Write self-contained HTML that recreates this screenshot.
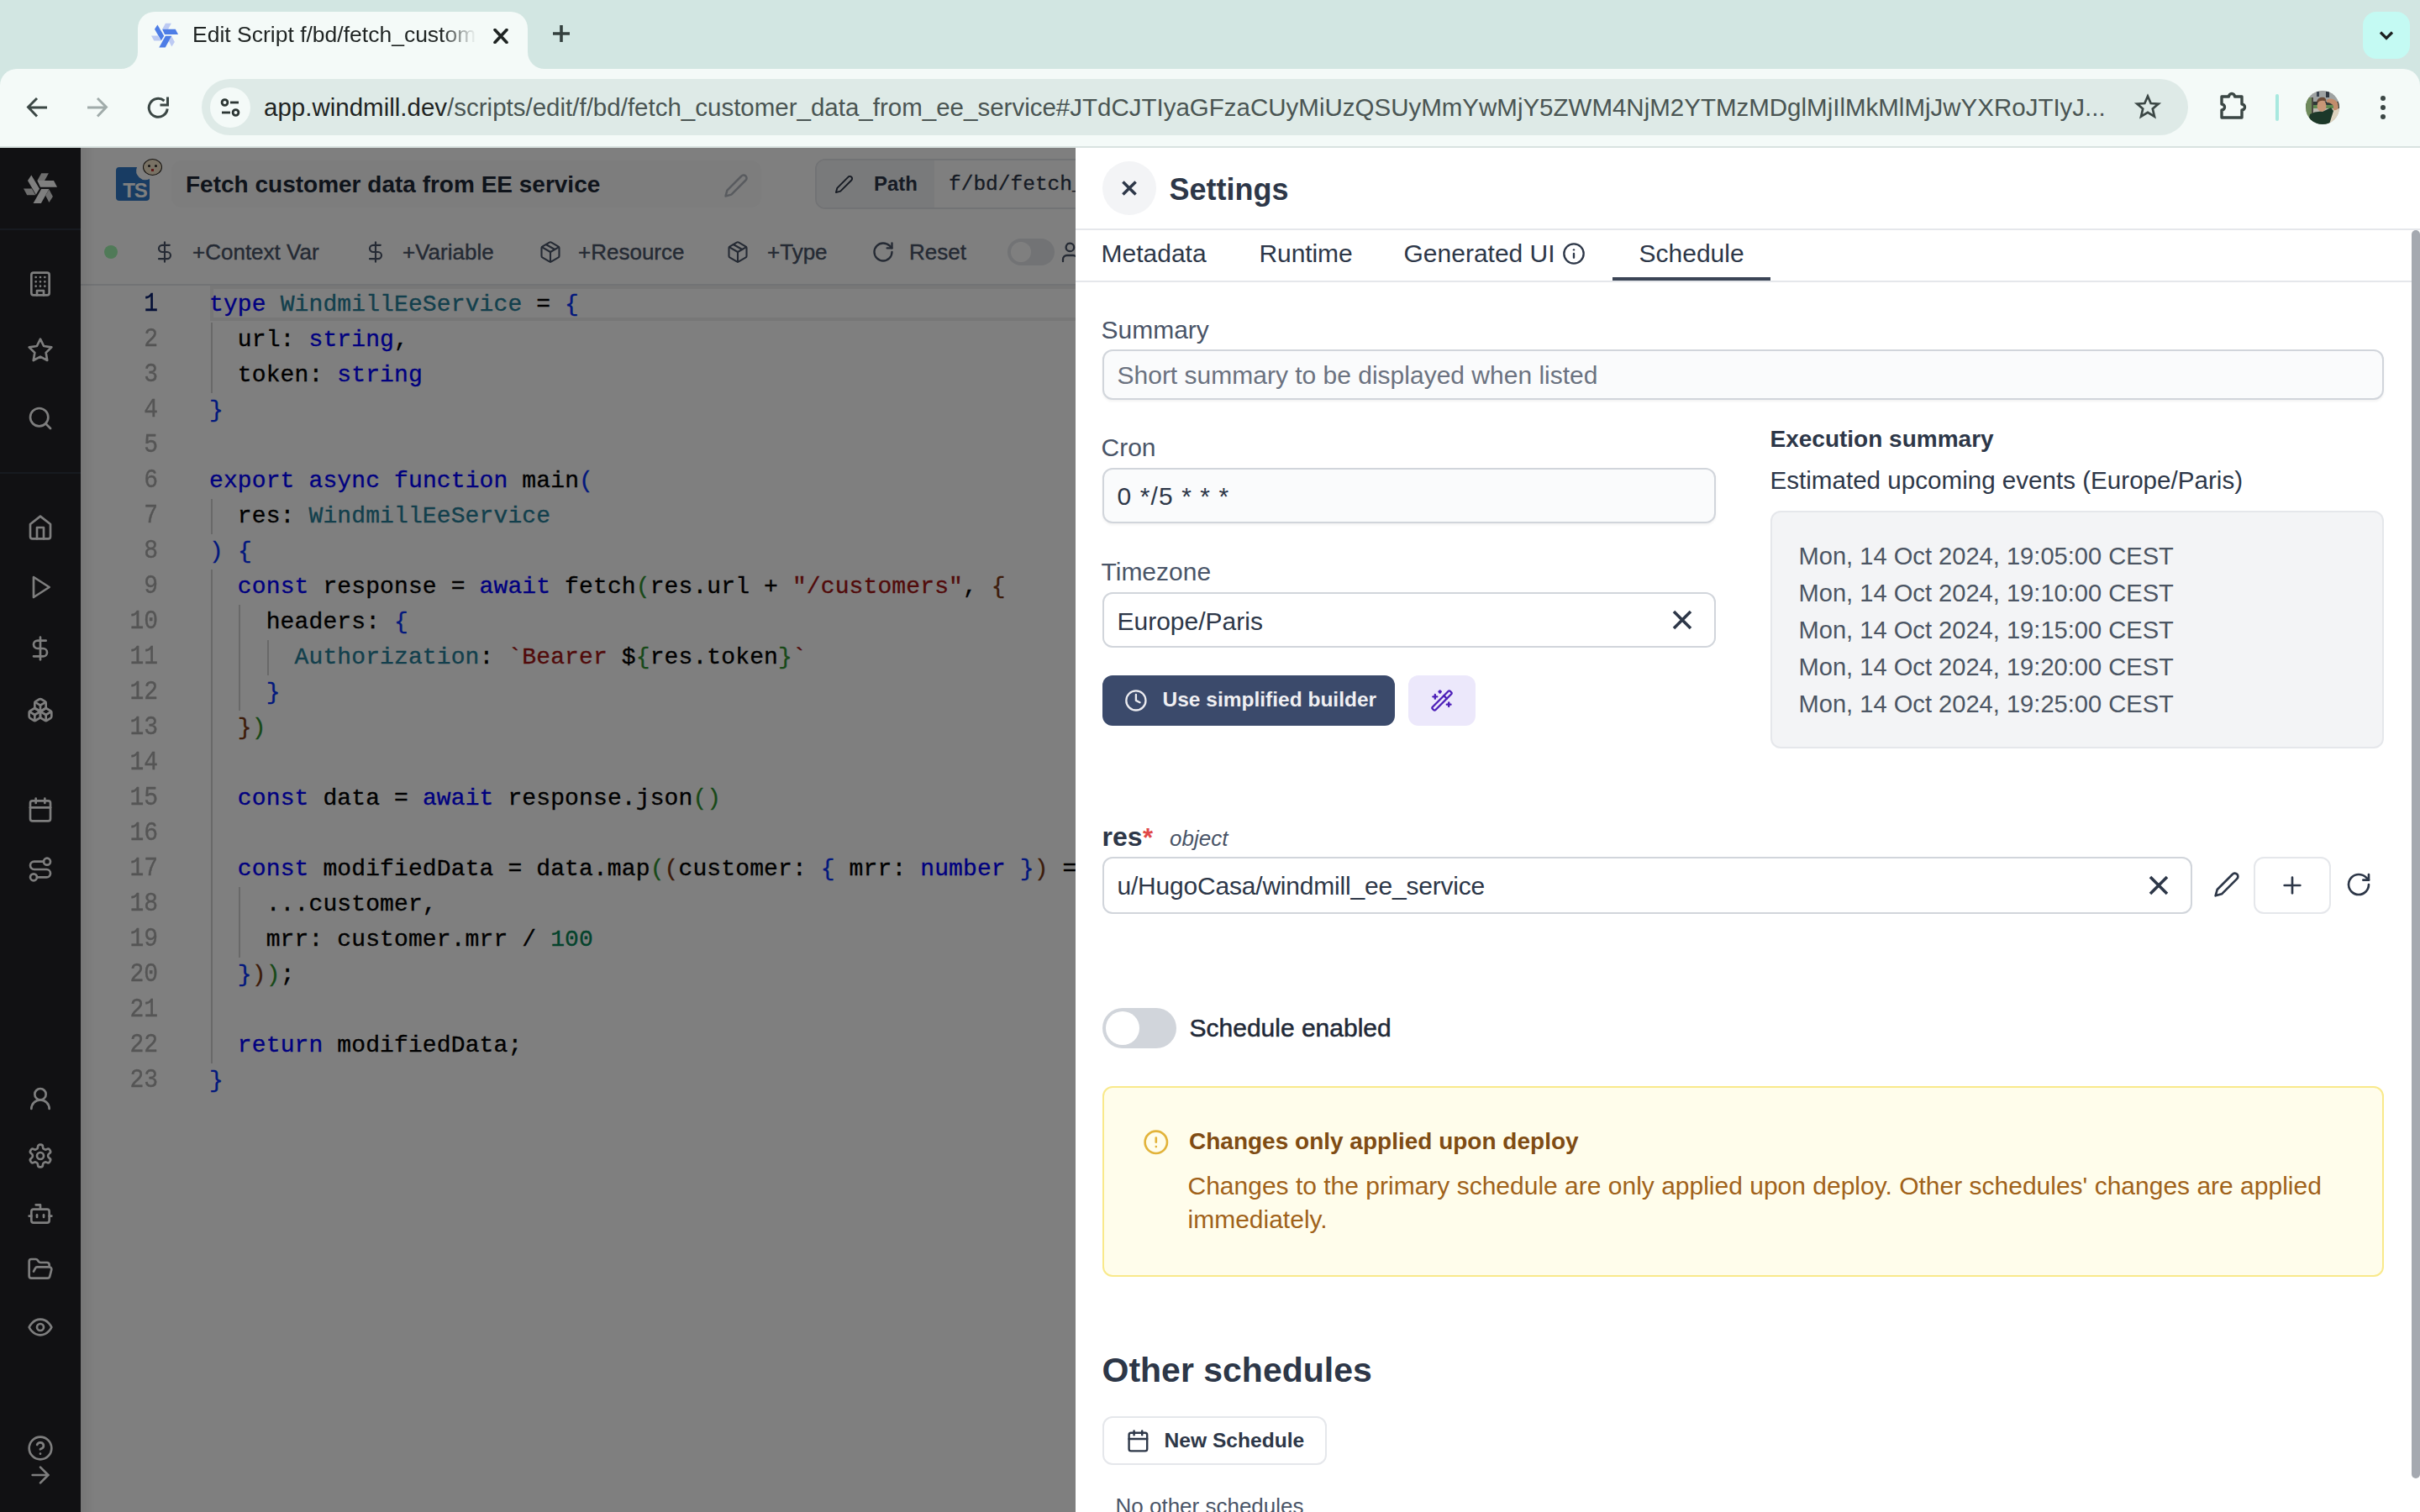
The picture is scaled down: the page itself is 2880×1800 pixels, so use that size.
<!DOCTYPE html>
<html><head><meta charset="utf-8">
<style>
*{box-sizing:border-box;margin:0;padding:0}
html,body{width:2880px;height:1800px;overflow:hidden;background:#fff;font-family:"Liberation Sans",sans-serif}
.abs{position:absolute}
svg{display:block}
/* chrome */
#tabstrip{left:0;top:0;width:2880px;height:176px;background:#d2e6e2}
#tab{left:164px;top:14px;width:464px;height:70px;background:#f4faf8;border-radius:20px 20px 0 0}
.flare{width:20px;height:20px;top:62px;background:#f4faf8}
.flare::after{content:"";position:absolute;inset:0;background:#d2e6e2}
#flL::after{border-bottom-right-radius:20px}
#flR::after{border-bottom-left-radius:20px}
#toolbar{left:0;top:82px;width:2880px;height:92px;background:#f4faf8;border-radius:20px 20px 0 0}
#tbline{left:0;top:174px;width:2880px;height:2px;background:#d9e2e0}
#omni{left:240px;top:94px;width:2364px;height:67px;background:#deeae7;border-radius:34px}
/* app */
#sidebar{left:0;top:176px;width:96px;height:1624px;background:#222326}
#editor{left:96px;top:176px;width:1184px;height:1624px;background:#fff;overflow:hidden}
#overlay{left:0;top:176px;width:1280px;height:1624px;background:rgba(0,0,0,0.5)}
#panel{left:1280px;top:176px;width:1600px;height:1624px;background:#fff;overflow:hidden;color:#2d3748}
.ln{left:0;width:92px;text-align:right;font-family:"Liberation Mono",monospace;font-size:28px;line-height:42px;height:42px;transform:scaleY(1.14);transform-origin:0 28.5px;-webkit-text-stroke:0.3px currentColor}
.code{left:153px;letter-spacing:0.12px;-webkit-text-stroke:0.35px currentColor;font-family:"Liberation Mono",monospace;font-size:28px;line-height:42px;height:42px;white-space:pre;color:#000}
.tb{top:104px;height:40px;font-size:26px;line-height:40px;color:#4a5568;white-space:nowrap;-webkit-text-stroke:0.4px #4a5568}
</style></head><body>
<!-- CHROME -->
<div id="tabstrip" class="abs"></div>
<div id="toolbar" class="abs"></div>
<div id="tab" class="abs"></div>
<div id="flL" class="abs flare" style="left:144px"></div>
<div id="flR" class="abs flare" style="left:628px"></div>
<div id="tbline" class="abs"></div>
<div id="omni" class="abs"></div>
<svg class="abs" style="left:180px;top:27px" width="32" height="30" viewBox="0 0 40 36">
 <g fill="#bccaf3"><polygon points="16.4,9 21.2,0.3 29.9,0.3 25.1,9"/><polygon points="0,18.5 9.8,18.5 14.3,26.2 4.2,26.2"/><polygon points="26.2,26.7 30.4,19.6 34.9,28 30.4,34.9"/></g>
 <g fill="#4d7de6"><polygon points="16.4,9 36,9 40,16.8 20,16.8"/><polygon points="5,9 9.3,2.4 19,18.8 14.8,25.7"/><polygon points="11.6,36 20.9,36 30.4,19 21.2,19"/></g>
</svg>
<div class="abs" id="tabtitle" style="left:229px;top:24px;width:340px;height:34px;font-size:26.5px;line-height:34px;color:#1f2423;white-space:nowrap;overflow:hidden;-webkit-mask-image:linear-gradient(90deg,#000 296px,transparent 338px)">Edit Script f/bd/fetch_customer_data_from_ee_service</div>
<svg class="abs" style="left:586px;top:34px" width="20" height="18" viewBox="0 0 20 18"><path d="M3 1.5 L17 16.5 M17 1.5 L3 16.5" stroke="#1f2423" stroke-width="3.6" stroke-linecap="round"/></svg>
<svg class="abs" style="left:656px;top:28px" width="24" height="24" viewBox="0 0 24 24"><path d="M12 2 V22 M2 12 H22" stroke="#34403e" stroke-width="3.6"/></svg>
<!-- nav -->
<svg class="abs" style="left:30px;top:114px" width="28" height="28" viewBox="0 0 28 28"><path d="M26 14 H4 M14 3 L3.5 13.5 L14 24.5" fill="none" stroke="#3b4745" stroke-width="2.9" stroke-linejoin="miter"/></svg>
<svg class="abs" style="left:102px;top:114px" width="28" height="28" viewBox="0 0 28 28"><path d="M2 14 H24 M14 3 L24.5 13.5 L14 24.5" fill="none" stroke="#a0abaa" stroke-width="2.9"/></svg>
<svg class="abs" style="left:174px;top:114px" width="28" height="28" overflow="visible" viewBox="0 0 28 28"><path d="M25.2 15.5 A11 11 0 1 1 21.5 6" fill="none" stroke="#3b4745" stroke-width="3"/><path d="M25.5 1.5 V11 H16.5" fill="none" stroke="#3b4745" stroke-width="3" stroke-linejoin="miter"/></svg>
<div class="abs" style="left:250px;top:104px;width:48px;height:48px;border-radius:24px;background:#f4faf8"></div>
<svg class="abs" style="left:260px;top:114px" width="28" height="28" viewBox="0 0 28 28"><circle cx="7.5" cy="8" r="3.4" fill="none" stroke="#2c3634" stroke-width="2.8"/><path d="M14 8 H24" stroke="#2c3634" stroke-width="2.8"/><circle cx="20.5" cy="20" r="3.4" fill="none" stroke="#2c3634" stroke-width="2.8"/><path d="M4 20 H14" stroke="#2c3634" stroke-width="2.8"/></svg>
<div class="abs" style="left:314px;top:108px;height:40px;font-size:29.5px;line-height:40px;color:#4a5553;white-space:nowrap"><span style="color:#1f2423">app.windmill.dev</span>/scripts/edit/f/bd/fetch_customer_data_from_ee_service#JTdCJTIyaGFzaCUyMiUzQSUyMmYwMjY5ZWM4NjM2YTMzMDglMjIlMkMlMjJwYXRoJTIyJ...</div>
<svg class="abs" style="left:2539px;top:110px" width="34" height="34" viewBox="0 0 24 24"><path d="M12 3.2 L14.6 9.2 L21 9.6 L16.1 13.8 L17.6 20.2 L12 16.8 L6.4 20.2 L7.9 13.8 L3 9.6 L9.4 9.2 Z" fill="none" stroke="#3b4745" stroke-width="1.9" stroke-linejoin="miter"/></svg>
<svg class="abs" style="left:2640px;top:108px" width="36" height="36" viewBox="0 0 36 36"><path d="M4 7 H12.5 A3.5 3.5 0 0 1 19.5 7 H28 V16 A3.5 3.5 0 0 1 28 23 V32 H4 V23 A3.5 3.5 0 0 0 4 16 Z" fill="none" stroke="#3b4745" stroke-width="3.4" stroke-linejoin="round"/></svg>
<div class="abs" style="left:2708px;top:112px;width:4px;height:32px;border-radius:2px;background:#a8e8df"></div>
<svg class="abs" style="left:2744px;top:108px" width="40" height="40" viewBox="0 0 40 40"><defs><clipPath id="av"><circle cx="20" cy="20" r="20"/></clipPath></defs><g clip-path="url(#av)"><rect width="40" height="40" fill="#b9b8b0"/><rect y="0" width="40" height="13" fill="#9ea2a2"/><rect x="13" y="1" width="3" height="6" fill="#3b4450"/><rect x="24" y="1" width="4" height="7" fill="#2f3740"/><rect x="0" y="13" width="40" height="8" fill="#2e3836"/><rect x="8" y="17" width="30" height="4" fill="#5f8a50"/><rect x="0" y="8" width="9" height="30" fill="#6f8a5c"/><rect x="7" y="8" width="2" height="26" fill="#4a4a40"/><rect x="27" y="22" width="13" height="18" fill="#ddd3bf"/><path d="M25 11 Q31 7 38 14 L39 20 Q37 24 33 23 L33 18 Q30 14 25 14 Z" fill="#c28d6c"/><ellipse cx="19" cy="18" rx="5.5" ry="7" fill="#c99777"/><path d="M13 13 Q15 7 22 8 Q25 10 24 13 Q19 10 14 14 Z" fill="#6b4a36"/><path d="M2 40 L5 28 Q12 24 20 25 Q26 22 30 20 L33 24 L28 40 Z" fill="#1c3829"/></g></svg>
<div class="abs" style="left:2833px;top:114px;width:6px;height:6px;border-radius:3px;background:#3b4745"></div>
<div class="abs" style="left:2833px;top:125px;width:6px;height:6px;border-radius:3px;background:#3b4745"></div>
<div class="abs" style="left:2833px;top:136px;width:6px;height:6px;border-radius:3px;background:#3b4745"></div>
<div class="abs" style="left:2812px;top:14px;width:56px;height:56px;border-radius:16px;background:#c4faf3"></div>
<svg class="abs" style="left:2828px;top:30px" width="24" height="24" viewBox="0 0 24 24"><path d="M5 8.5 L12 15.5 L19 8.5" fill="none" stroke="#1c2120" stroke-width="3.2"/></svg>


<!-- APP -->
<!-- SIDEBAR -->
<div id="sidebar" class="abs">
<svg class="abs" style="left:28px;top:30px" width="40" height="36" viewBox="0 0 40 36"><g fill="#dcdcdc"><polygon points="16.4,9 21.2,0.3 29.9,0.3 25.1,9"/><polygon points="0,18.5 9.8,18.5 14.3,26.2 4.2,26.2"/><polygon points="26.2,26.7 30.4,19.6 34.9,28 30.4,34.9"/></g><g fill="#ffffff"><polygon points="16.4,9 36,9 40,16.8 20,16.8"/><polygon points="5,9 9.3,2.4 19,18.8 14.8,25.7"/><polygon points="11.6,36 20.9,36 30.4,19 21.2,19"/></g></svg>
<div class="abs" style="left:0;top:96px;width:96px;height:2px;background:#2e3440"></div>
<div class="abs" style="left:0;top:386px;width:96px;height:2px;background:#2e3440"></div>
<svg class="abs" style="left:32.0px;top:146.0px" width="32" height="32" viewBox="0 0 24 24" fill="none" stroke="#fdfdfd" stroke-width="2" stroke-linecap="round" stroke-linejoin="round"><rect width="16" height="20" x="4" y="2" rx="2" ry="2"/><path d="M9 22v-4h6v4"/><path d="M8 6h.01M16 6h.01M12 6h.01M12 10h.01M12 14h.01M16 10h.01M16 14h.01M8 10h.01M8 14h.01"/></svg>
<svg class="abs" style="left:32.0px;top:225.0px" width="32" height="32" viewBox="0 0 24 24" fill="none" stroke="#fdfdfd" stroke-width="2" stroke-linecap="round" stroke-linejoin="round"><polygon points="12 2 15.09 8.26 22 9.27 17 14.14 18.18 21.02 12 17.77 5.82 21.02 7 14.14 2 9.27 8.91 8.26 12 2"/></svg>
<svg class="abs" style="left:32.0px;top:306.0px" width="32" height="32" viewBox="0 0 24 24" fill="none" stroke="#fdfdfd" stroke-width="2" stroke-linecap="round" stroke-linejoin="round"><circle cx="11" cy="11" r="8"/><path d="m21 21-4.3-4.3"/></svg>
<svg class="abs" style="left:32.0px;top:436.0px" width="32" height="32" viewBox="0 0 24 24" fill="none" stroke="#fdfdfd" stroke-width="2" stroke-linecap="round" stroke-linejoin="round"><path d="m3 9 9-7 9 7v11a2 2 0 0 1-2 2H5a2 2 0 0 1-2-2z"/><polyline points="9 22 9 12 15 12 15 22"/></svg>
<svg class="abs" style="left:32.0px;top:507.0px" width="32" height="32" viewBox="0 0 24 24" fill="none" stroke="#fdfdfd" stroke-width="2" stroke-linecap="round" stroke-linejoin="round"><polygon points="6 3 20 12 6 21 6 3"/></svg>
<svg class="abs" style="left:32.0px;top:580.0px" width="32" height="32" viewBox="0 0 24 24" fill="none" stroke="#fdfdfd" stroke-width="2" stroke-linecap="round" stroke-linejoin="round"><line x1="12" x2="12" y1="2" y2="22"/><path d="M17 5H9.5a3.5 3.5 0 0 0 0 7h5a3.5 3.5 0 0 1 0 7H6"/></svg>
<svg class="abs" style="left:32.0px;top:653.0px" width="32" height="32" viewBox="0 0 24 24" fill="none" stroke="#fdfdfd" stroke-width="2" stroke-linecap="round" stroke-linejoin="round"><path d="M2.97 12.92A2 2 0 0 0 2 14.63v3.24a2 2 0 0 0 .97 1.71l3 1.8a2 2 0 0 0 2.06 0L12 19v-5.5l-5-3-4.03 2.42Z"/><path d="m7 16.5-4.74-2.85"/><path d="m7 16.5 5-3"/><path d="M7 16.5v5.17"/><path d="M12 13.5V19l3.97 2.38a2 2 0 0 0 2.06 0l3-1.8a2 2 0 0 0 .97-1.71v-3.24a2 2 0 0 0-.97-1.71L17 10.5l-5 3Z"/><path d="m17 16.5-5-3"/><path d="m17 16.5 4.74-2.85"/><path d="M17 16.5v5.17"/><path d="M7.97 4.42A2 2 0 0 0 7 6.13v4.37l5 3 5-3V6.13a2 2 0 0 0-.97-1.71l-3-1.8a2 2 0 0 0-2.06 0l-3 1.8Z"/><path d="M12 8 7.26 5.15"/><path d="m12 8 4.74-2.85"/><path d="M12 13.5V8"/></svg>
<svg class="abs" style="left:32.0px;top:772.0px" width="32" height="32" viewBox="0 0 24 24" fill="none" stroke="#fdfdfd" stroke-width="2" stroke-linecap="round" stroke-linejoin="round"><rect width="18" height="18" x="3" y="4" rx="2" ry="2"/><line x1="16" x2="16" y1="2" y2="6"/><line x1="8" x2="8" y1="2" y2="6"/><line x1="3" x2="21" y1="10" y2="10"/></svg>
<svg class="abs" style="left:32.0px;top:843.0px" width="32" height="32" viewBox="0 0 24 24" fill="none" stroke="#fdfdfd" stroke-width="2" stroke-linecap="round" stroke-linejoin="round"><circle cx="6" cy="19" r="3"/><path d="M9 19h8.5a3.5 3.5 0 0 0 0-7h-11a3.5 3.5 0 0 1 0-7H15"/><circle cx="18" cy="5" r="3"/></svg>
<svg class="abs" style="left:32.0px;top:1116.0px" width="32" height="32" viewBox="0 0 24 24" fill="none" stroke="#fdfdfd" stroke-width="2" stroke-linecap="round" stroke-linejoin="round"><circle cx="12" cy="8" r="5"/><path d="M20 21a8 8 0 0 0-16 0"/></svg>
<svg class="abs" style="left:32.0px;top:1184.0px" width="32" height="32" viewBox="0 0 24 24" fill="none" stroke="#fdfdfd" stroke-width="2" stroke-linecap="round" stroke-linejoin="round"><path d="M12.22 2h-.44a2 2 0 0 0-2 2v.18a2 2 0 0 1-1 1.73l-.43.25a2 2 0 0 1-2 0l-.15-.08a2 2 0 0 0-2.73.73l-.22.38a2 2 0 0 0 .73 2.73l.15.1a2 2 0 0 1 1 1.72v.51a2 2 0 0 1-1 1.74l-.15.09a2 2 0 0 0-.73 2.73l.22.38a2 2 0 0 0 2.73.73l.15-.08a2 2 0 0 1 2 0l.43.25a2 2 0 0 1 1 1.73V20a2 2 0 0 0 2 2h.44a2 2 0 0 0 2-2v-.18a2 2 0 0 1 1-1.73l.43-.25a2 2 0 0 1 2 0l.15.08a2 2 0 0 0 2.73-.73l.22-.39a2 2 0 0 0-.73-2.73l-.15-.08a2 2 0 0 1-1-1.74v-.5a2 2 0 0 1 1-1.74l.15-.09a2 2 0 0 0 .73-2.73l-.22-.38a2 2 0 0 0-2.73-.73l-.15.08a2 2 0 0 1-2 0l-.43-.25a2 2 0 0 1-1-1.73V4a2 2 0 0 0-2-2z"/><circle cx="12" cy="12" r="3"/></svg>
<svg class="abs" style="left:32.0px;top:1253.0px" width="32" height="32" viewBox="0 0 24 24" fill="none" stroke="#fdfdfd" stroke-width="2" stroke-linecap="round" stroke-linejoin="round"><path d="M12 8V4H8"/><rect width="16" height="12" x="4" y="8" rx="2"/><path d="M2 14h2"/><path d="M20 14h2"/><path d="M15 13v2"/><path d="M9 13v2"/></svg>
<svg class="abs" style="left:32.0px;top:1319.0px" width="32" height="32" viewBox="0 0 24 24" fill="none" stroke="#fdfdfd" stroke-width="2" stroke-linecap="round" stroke-linejoin="round"><path d="m6 14 1.5-2.9A2 2 0 0 1 9.24 10H20a2 2 0 0 1 1.94 2.5l-1.54 6a2 2 0 0 1-1.95 1.5H4a2 2 0 0 1-2-2V5a2 2 0 0 1 2-2h3.9a2 2 0 0 1 1.69.9l.81 1.2a2 2 0 0 0 1.67.9H18a2 2 0 0 1 2 2v2"/></svg>
<svg class="abs" style="left:32.0px;top:1388.0px" width="32" height="32" viewBox="0 0 24 24" fill="none" stroke="#fdfdfd" stroke-width="2" stroke-linecap="round" stroke-linejoin="round"><path d="M2 12s3-7 10-7 10 7 10 7-3 7-10 7-10-7-10-7Z"/><circle cx="12" cy="12" r="3"/></svg>
<svg class="abs" style="left:32.0px;top:1532.0px" width="32" height="32" viewBox="0 0 24 24" fill="none" stroke="#fdfdfd" stroke-width="2" stroke-linecap="round" stroke-linejoin="round"><circle cx="12" cy="12" r="10"/><path d="M9.09 9a3 3 0 0 1 5.83 1c0 2-3 3-3 3"/><path d="M12 17h.01"/></svg>
<svg class="abs" style="left:32.0px;top:1564.0px" width="32" height="32" viewBox="0 0 24 24" fill="none" stroke="#fdfdfd" stroke-width="2" stroke-linecap="round" stroke-linejoin="round"><path d="M5 12h14"/><path d="m12 5 7 7-7 7"/></svg>
</div>

<div id="editor" class="abs">
 <!-- header -->
 <div class="abs" style="left:108px;top:15px;width:702px;height:56px;border-radius:12px;background:#fafbfb"></div>
 <svg class="abs" style="left:42px;top:23px" width="40" height="40" viewBox="0 0 40 40"><path d="M4 0 H25 A11 11 0 0 0 40 14 V36 A4 4 0 0 1 36 40 H4 A4 4 0 0 1 0 36 V4 A4 4 0 0 1 4 0 Z" fill="#3178c6"/><text x="22.5" y="36" font-family="Liberation Sans" font-weight="700" font-size="24" fill="#fff" text-anchor="middle" letter-spacing="-1">TS</text></svg>
 <div class="abs" style="left:74px;top:13px;width:23px;height:20px;border-radius:50%;background:#f3e4c8;border:1.5px solid #2a2520"></div>
 <div class="abs" style="left:80px;top:20px;width:3px;height:3px;border-radius:50%;background:#222"></div>
 <div class="abs" style="left:88px;top:20px;width:3px;height:3px;border-radius:50%;background:#222"></div>
 <div class="abs" style="left:84px;top:25px;width:3px;height:3px;background:#c03030"></div>
 <div class="abs" style="left:125px;top:24px;height:40px;font-size:28px;font-weight:700;line-height:40px;color:#1f2937;white-space:nowrap">Fetch customer data from EE service</div>
 <svg class="abs" style="left:765px;top:30px" width="30" height="30" viewBox="0 0 24 24" fill="none" stroke="#b2b7bf" stroke-width="2" stroke-linecap="round" stroke-linejoin="round"><path d="M17 3a2.85 2.83 0 1 1 4 4L7.5 20.5 2 22l1.5-5.5Z"/></svg>
 <div class="abs" style="left:874px;top:13px;width:400px;height:60px;border:2px solid #e5e7eb;border-radius:12px;background:#fff;overflow:hidden">
   <div class="abs" style="left:0;top:0;width:140px;height:56px;background:#f3f4f6"></div>
   <svg class="abs" style="left:20.5px;top:16.5px" width="23" height="23" viewBox="0 0 24 24" fill="none" stroke="#2d3748" stroke-width="2" stroke-linecap="round" stroke-linejoin="round"><path d="M17 3a2.85 2.83 0 1 1 4 4L7.5 20.5 2 22l1.5-5.5Z"/></svg>
   <div class="abs" style="left:68px;top:8px;height:40px;font-size:24px;font-weight:700;line-height:40px;color:#2d3748">Path</div>
   <div class="abs" style="left:157px;top:9px;height:40px;font-family:'Liberation Mono';font-size:24.5px;letter-spacing:0px;-webkit-text-stroke:0.3px #2d3748;line-height:40px;color:#2d3748;white-space:nowrap">f/bd/fetch_customer_data_from_ee_service</div>
 </div>
 <!-- toolbar -->
 <div class="abs" style="left:28px;top:116px;width:16px;height:16px;border-radius:8px;background:#a0f5b0"></div>
 <svg class="abs" style="left:86px;top:110px" width="28" height="28" viewBox="0 0 24 24" fill="none" stroke="#4a5568" stroke-width="1.8" stroke-linecap="round" stroke-linejoin="round"><line x1="12" x2="12" y1="2" y2="22"/><path d="M17 5H9.5a3.5 3.5 0 0 0 0 7h5a3.5 3.5 0 0 1 0 7H6"/></svg>
 <div class="abs tb" style="left:133px">+Context Var</div>
 <svg class="abs" style="left:337px;top:110px" width="28" height="28" viewBox="0 0 24 24" fill="none" stroke="#4a5568" stroke-width="1.8" stroke-linecap="round" stroke-linejoin="round"><line x1="12" x2="12" y1="2" y2="22"/><path d="M17 5H9.5a3.5 3.5 0 0 0 0 7h5a3.5 3.5 0 0 1 0 7H6"/></svg>
 <div class="abs tb" style="left:383px">+Variable</div>
 <svg class="abs" style="left:545px;top:110px" width="28" height="28" viewBox="0 0 24 24" fill="none" stroke="#4a5568" stroke-width="1.8" stroke-linecap="round" stroke-linejoin="round"><path d="m7.5 4.27 9 5.15"/><path d="M21 8a2 2 0 0 0-1-1.73l-7-4a2 2 0 0 0-2 0l-7 4A2 2 0 0 0 3 8v8a2 2 0 0 0 1 1.73l7 4a2 2 0 0 0 2 0l7-4A2 2 0 0 0 21 16Z"/><path d="m3.3 7 8.7 5 8.7-5"/><path d="M12 22V12"/></svg>
 <div class="abs tb" style="left:592px">+Resource</div>
 <svg class="abs" style="left:768px;top:110px" width="28" height="28" viewBox="0 0 24 24" fill="none" stroke="#4a5568" stroke-width="1.8" stroke-linecap="round" stroke-linejoin="round"><path d="m7.5 4.27 9 5.15"/><path d="M21 8a2 2 0 0 0-1-1.73l-7-4a2 2 0 0 0-2 0l-7 4A2 2 0 0 0 3 8v8a2 2 0 0 0 1 1.73l7 4a2 2 0 0 0 2 0l7-4A2 2 0 0 0 21 16Z"/><path d="m3.3 7 8.7 5 8.7-5"/><path d="M12 22V12"/></svg>
 <div class="abs tb" style="left:817px">+Type</div>
 <svg class="abs" style="left:941px;top:110px" width="28" height="28" viewBox="0 0 24 24" fill="none" stroke="#4a5568" stroke-width="2" stroke-linecap="round" stroke-linejoin="round"><path d="M21 12a9 9 0 1 1-9-9c2.52 0 4.93 1 6.74 2.74L21 8"/><path d="M21 3v5h-5"/></svg>
 <div class="abs tb" style="left:986px">Reset</div>
 <div class="abs" style="left:1103px;top:108px;width:56px;height:32px;border-radius:16px;background:#e5e7eb"></div>
 <div class="abs" style="left:1107px;top:112px;width:24px;height:24px;border-radius:12px;background:#fff"></div>
 <svg class="abs" style="left:1162.6px;top:109.6px" width="28.8" height="28.8" viewBox="0 0 24 24" fill="none" stroke="#4a5568" stroke-width="1.9" stroke-linecap="round" stroke-linejoin="round"><path d="M19 21v-2a4 4 0 0 0-4-4H9a4 4 0 0 0-4 4v2"/><circle cx="12" cy="7" r="4"/></svg>
 <div class="abs" style="left:0;top:162px;width:1184px;height:2px;background:#e5e7eb"></div>
 <!-- code -->
 <div class="abs" style="left:154px;top:164px;width:1100px;height:42px;border:4px solid #eeeeee;border-right:none"></div>
<div class="abs" style="left:154.5px;top:208px;width:2px;height:84px;background:#d3d3d3"></div>
<div class="abs" style="left:154.5px;top:418px;width:2px;height:42px;background:#d3d3d3"></div>
<div class="abs" style="left:154.5px;top:502px;width:2px;height:588px;background:#d3d3d3"></div>
<div class="abs" style="left:188.1px;top:544px;width:2px;height:126px;background:#d3d3d3"></div>
<div class="abs" style="left:188.1px;top:880px;width:2px;height:84px;background:#d3d3d3"></div>
<div class="abs" style="left:221.7px;top:586px;width:2px;height:42px;background:#d3d3d3"></div>
<div class="abs ln" style="top:166px;color:#0b216f">1</div>
<div class="abs code" style="top:166px"><span style="color:#0000ff">type</span> <span style="color:#267f99">WindmillEeService</span> = <span style="color:#0431fa">{</span></div>
<div class="abs ln" style="top:208px;color:#aaaaaa">2</div>
<div class="abs code" style="top:208px">  url: <span style="color:#0000ff">string</span>,</div>
<div class="abs ln" style="top:250px;color:#aaaaaa">3</div>
<div class="abs code" style="top:250px">  token: <span style="color:#0000ff">string</span></div>
<div class="abs ln" style="top:292px;color:#aaaaaa">4</div>
<div class="abs code" style="top:292px"><span style="color:#0431fa">}</span></div>
<div class="abs ln" style="top:334px;color:#aaaaaa">5</div>
<div class="abs code" style="top:334px"></div>
<div class="abs ln" style="top:376px;color:#aaaaaa">6</div>
<div class="abs code" style="top:376px"><span style="color:#0000ff">export</span> <span style="color:#0000ff">async</span> <span style="color:#0000ff">function</span> main<span style="color:#0431fa">(</span></div>
<div class="abs ln" style="top:418px;color:#aaaaaa">7</div>
<div class="abs code" style="top:418px">  res: <span style="color:#267f99">WindmillEeService</span></div>
<div class="abs ln" style="top:460px;color:#aaaaaa">8</div>
<div class="abs code" style="top:460px"><span style="color:#0431fa">)</span> <span style="color:#0431fa">{</span></div>
<div class="abs ln" style="top:502px;color:#aaaaaa">9</div>
<div class="abs code" style="top:502px">  <span style="color:#0000ff">const</span> response = <span style="color:#0000ff">await</span> fetch<span style="color:#319331">(</span>res.url + <span style="color:#a31515">"/customers"</span>, <span style="color:#7b3814">{</span></div>
<div class="abs ln" style="top:544px;color:#aaaaaa">10</div>
<div class="abs code" style="top:544px">    headers: <span style="color:#0431fa">{</span></div>
<div class="abs ln" style="top:586px;color:#aaaaaa">11</div>
<div class="abs code" style="top:586px">      <span style="color:#267f99">Authorization</span>: <span style="color:#a31515">`Bearer </span>$<span style="color:#319331">{</span>res.token<span style="color:#319331">}</span><span style="color:#a31515">`</span></div>
<div class="abs ln" style="top:628px;color:#aaaaaa">12</div>
<div class="abs code" style="top:628px">    <span style="color:#0431fa">}</span></div>
<div class="abs ln" style="top:670px;color:#aaaaaa">13</div>
<div class="abs code" style="top:670px">  <span style="color:#7b3814">}</span><span style="color:#319331">)</span></div>
<div class="abs ln" style="top:712px;color:#aaaaaa">14</div>
<div class="abs code" style="top:712px"></div>
<div class="abs ln" style="top:754px;color:#aaaaaa">15</div>
<div class="abs code" style="top:754px">  <span style="color:#0000ff">const</span> data = <span style="color:#0000ff">await</span> response.json<span style="color:#319331">()</span></div>
<div class="abs ln" style="top:796px;color:#aaaaaa">16</div>
<div class="abs code" style="top:796px"></div>
<div class="abs ln" style="top:838px;color:#aaaaaa">17</div>
<div class="abs code" style="top:838px">  <span style="color:#0000ff">const</span> modifiedData = data.map<span style="color:#319331">(</span><span style="color:#7b3814">(</span>customer: <span style="color:#0431fa">{</span> mrr: <span style="color:#0000ff">number</span> <span style="color:#0431fa">}</span><span style="color:#7b3814">)</span> =&gt; <span style="color:#7b3814">(</span><span style="color:#0431fa">{</span></div>
<div class="abs ln" style="top:880px;color:#aaaaaa">18</div>
<div class="abs code" style="top:880px">    ...customer,</div>
<div class="abs ln" style="top:922px;color:#aaaaaa">19</div>
<div class="abs code" style="top:922px">    mrr: customer.mrr / <span style="color:#098658">100</span></div>
<div class="abs ln" style="top:964px;color:#aaaaaa">20</div>
<div class="abs code" style="top:964px">  <span style="color:#0431fa">}</span><span style="color:#7b3814">)</span><span style="color:#319331">)</span>;</div>
<div class="abs ln" style="top:1006px;color:#aaaaaa">21</div>
<div class="abs code" style="top:1006px"></div>
<div class="abs ln" style="top:1048px;color:#aaaaaa">22</div>
<div class="abs code" style="top:1048px">  <span style="color:#0000ff">return</span> modifiedData;</div>
<div class="abs ln" style="top:1090px;color:#aaaaaa">23</div>
<div class="abs code" style="top:1090px"><span style="color:#0431fa">}</span></div>
 <div class="abs" style="left:0;top:0;width:18px;height:1624px;background:linear-gradient(90deg,rgba(0,0,0,0.07),rgba(0,0,0,0))"></div>
</div>
<div id="overlay" class="abs"></div>
<div id="panel" class="abs">
<div class="abs" style="left:-1px;top:0px;width:1px;height:1624px;background:rgba(0,0,0,0.08)"></div>
<div class="abs" style="left:32px;top:16px;width:64px;height:64px;border-radius:32px;background:#f3f4f6"></div>
<svg class="abs" style="left:48.0px;top:32.0px" width="32" height="32" viewBox="0 0 24 24" fill="none" stroke="#2d3748" stroke-width="2.6" stroke-linecap="round" stroke-linejoin="round"><path d="M6.3 6.3 L17.7 17.7 M17.7 6.3 L6.3 17.7" stroke-linecap="butt"/></svg>
<div class="abs" style="left:111.5px;top:26.1px;height:47px;line-height:47px;font-size:36px;font-weight:700;font-style:normal;color:#2d3748;white-space:nowrap;font-family:'Liberation Sans';">Settings</div>
<div class="abs" style="left:0px;top:96px;width:1600px;height:2px;background:#e5e7eb"></div>
<div class="abs" style="left:30.5px;top:106.3px;height:39px;line-height:39px;font-size:30px;font-weight:400;font-style:normal;color:#2d3748;white-space:nowrap;font-family:'Liberation Sans';">Metadata</div>
<div class="abs" style="left:218.5px;top:106.3px;height:39px;line-height:39px;font-size:30px;font-weight:400;font-style:normal;color:#2d3748;white-space:nowrap;font-family:'Liberation Sans';letter-spacing:-0.1px">Runtime</div>
<div class="abs" style="left:390.5px;top:106.3px;height:39px;line-height:39px;font-size:30px;font-weight:400;font-style:normal;color:#2d3748;white-space:nowrap;font-family:'Liberation Sans';">Generated UI</div>
<svg class="abs" style="left:579.0px;top:112.0px" width="28" height="28" viewBox="0 0 24 24" fill="none" stroke="#2d3748" stroke-width="2" stroke-linecap="round" stroke-linejoin="round"><circle cx="12" cy="12" r="10"/><path d="M12 16v-4"/><path d="M12 8h.01"/></svg>
<div class="abs" style="left:670.5px;top:106.3px;height:39px;line-height:39px;font-size:30px;font-weight:400;font-style:normal;color:#2d3748;white-space:nowrap;font-family:'Liberation Sans';">Schedule</div>
<div class="abs" style="left:0px;top:158px;width:1590px;height:2px;background:#e5e7eb"></div>
<div class="abs" style="left:639px;top:154px;width:188px;height:4px;background:#3b4556"></div>
<div class="abs" style="left:1590px;top:98px;width:10px;height:1486px;background:#a5a9b0;border-radius:5px"></div>
<div class="abs" style="left:30.5px;top:196.6px;height:39px;line-height:39px;font-size:30px;font-weight:400;font-style:normal;color:#4a5568;white-space:nowrap;font-family:'Liberation Sans';">Summary</div>
<div class="abs" style="left:32px;top:240px;width:1525px;height:60px;border:2px solid #d1d5db;border-radius:12px;background:#fafbfc;box-shadow:0 2px 3px rgba(0,0,0,0.05)"></div>
<div class="abs" style="left:49.5px;top:250.6px;height:39px;line-height:39px;font-size:30px;font-weight:400;font-style:normal;color:#6b7280;white-space:nowrap;font-family:'Liberation Sans';">Short summary to be displayed when listed</div>
<div class="abs" style="left:30.5px;top:336.6px;height:39px;line-height:39px;font-size:30px;font-weight:400;font-style:normal;color:#4a5568;white-space:nowrap;font-family:'Liberation Sans';">Cron</div>
<div class="abs" style="left:32px;top:381px;width:730px;height:66px;border:2px solid #d1d5db;border-radius:12px;background:#fafbfc;box-shadow:0 2px 3px rgba(0,0,0,0.05)"></div>
<div class="abs" style="left:49.5px;top:394.6px;height:39px;line-height:39px;font-size:30px;font-weight:400;font-style:normal;color:#2d3748;white-space:nowrap;font-family:'Liberation Sans';letter-spacing:1.1px">0 */5 * * *</div>
<div class="abs" style="left:30.5px;top:484.6px;height:39px;line-height:39px;font-size:30px;font-weight:400;font-style:normal;color:#4a5568;white-space:nowrap;font-family:'Liberation Sans';">Timezone</div>
<div class="abs" style="left:32px;top:529px;width:730px;height:66px;border:2px solid #d1d5db;border-radius:12px;background:#fff"></div>
<div class="abs" style="left:49.5px;top:543.6px;height:39px;line-height:39px;font-size:30px;font-weight:400;font-style:normal;color:#2d3748;white-space:nowrap;font-family:'Liberation Sans';">Europe/Paris</div>
<svg class="abs" style="left:709.5px;top:550.0px" width="24" height="24" viewBox="0 0 24 24" fill="none" stroke="#2d3748" stroke-width="3.6" stroke-linecap="round" stroke-linejoin="round"><path d="M2 2 L22 22 M22 2 L2 22" stroke-linecap="butt"/></svg>
<div class="abs" style="left:32px;top:628px;width:348px;height:60px;border-radius:12px;background:#3b4a6b"></div>
<svg class="abs" style="left:57.59999999999991px;top:644.1px" width="27.8" height="27.8" viewBox="0 0 24 24" fill="none" stroke="#ececf0" stroke-width="2" stroke-linecap="round" stroke-linejoin="round"><circle cx="12" cy="12" r="10"/><polyline points="12 6 12 12 16 14"/></svg>
<div class="abs" style="left:103.5px;top:640.7px;height:32px;line-height:32px;font-size:24.5px;font-weight:700;font-style:normal;color:#efeff2;white-space:nowrap;font-family:'Liberation Sans';">Use simplified builder</div>
<div class="abs" style="left:396px;top:628px;width:80px;height:60px;border-radius:12px;background:#ece8fb"></div>
<svg class="abs" style="left:421.5px;top:643.8px" width="28" height="28" viewBox="0 0 24 24" fill="none" stroke="#4c1fb8" stroke-width="2" stroke-linecap="round" stroke-linejoin="round"><path d="m21.64 3.64-1.28-1.28a1.21 1.21 0 0 0-1.72 0L2.36 18.64a1.21 1.21 0 0 0 0 1.72l1.28 1.28a1.2 1.2 0 0 0 1.72 0L21.64 5.36a1.2 1.2 0 0 0 0-1.72"/><path d="m14 7 3 3"/><path d="M5 6v4"/><path d="M19 14v4"/><path d="M10 2v2"/><path d="M7 8H3"/><path d="M21 16h-4"/><path d="M11 3H9"/></svg>
<div class="abs" style="left:826.5px;top:328.7px;height:36px;line-height:36px;font-size:28px;font-weight:700;font-style:normal;color:#2d3748;white-space:nowrap;font-family:'Liberation Sans';">Execution summary</div>
<div class="abs" style="left:826.5px;top:377.4px;height:38px;line-height:38px;font-size:29.6px;font-weight:400;font-style:normal;color:#2d3748;white-space:nowrap;font-family:'Liberation Sans';">Estimated upcoming events (Europe/Paris)</div>
<div class="abs" style="left:827px;top:432px;width:730px;height:283px;border:2px solid #e5e7eb;border-radius:12px;background:#f3f4f6"></div>
<div class="abs" style="left:860.5px;top:467.1px;height:38px;line-height:38px;font-size:29.1px;font-weight:400;font-style:normal;color:#4b5563;white-space:nowrap;font-family:'Liberation Sans';">Mon, 14 Oct 2024, 19:05:00 CEST</div>
<div class="abs" style="left:860.5px;top:511.1px;height:38px;line-height:38px;font-size:29.1px;font-weight:400;font-style:normal;color:#4b5563;white-space:nowrap;font-family:'Liberation Sans';">Mon, 14 Oct 2024, 19:10:00 CEST</div>
<div class="abs" style="left:860.5px;top:555.1px;height:38px;line-height:38px;font-size:29.1px;font-weight:400;font-style:normal;color:#4b5563;white-space:nowrap;font-family:'Liberation Sans';">Mon, 14 Oct 2024, 19:15:00 CEST</div>
<div class="abs" style="left:860.5px;top:599.1px;height:38px;line-height:38px;font-size:29.1px;font-weight:400;font-style:normal;color:#4b5563;white-space:nowrap;font-family:'Liberation Sans';">Mon, 14 Oct 2024, 19:20:00 CEST</div>
<div class="abs" style="left:860.5px;top:643.1px;height:38px;line-height:38px;font-size:29.1px;font-weight:400;font-style:normal;color:#4b5563;white-space:nowrap;font-family:'Liberation Sans';">Mon, 14 Oct 2024, 19:25:00 CEST</div>
<div class="abs" style="left:31.5px;top:799.4px;height:42px;line-height:42px;font-size:32px;font-weight:700;font-style:normal;color:#2d3748;white-space:nowrap;font-family:'Liberation Sans';">res</div>
<div class="abs" style="left:80.0px;top:801.8px;height:40px;line-height:40px;font-size:31px;font-weight:700;font-style:normal;color:#e04848;white-space:nowrap;font-family:'Liberation Sans';">*</div>
<div class="abs" style="left:112.0px;top:805.4px;height:34px;line-height:34px;font-size:26px;font-weight:400;font-style:italic;color:#4a5568;white-space:nowrap;font-family:'Liberation Sans';">object</div>
<div class="abs" style="left:32px;top:844px;width:1297px;height:68px;border:2px solid #d1d5db;border-radius:12px;background:#fff"></div>
<div class="abs" style="left:49.5px;top:859.1px;height:39px;line-height:39px;font-size:30px;font-weight:400;font-style:normal;color:#2d3748;white-space:nowrap;font-family:'Liberation Sans';letter-spacing:-0.2px">u/HugoCasa/windmill_ee_service</div>
<svg class="abs" style="left:1276.5px;top:865.5px" width="24" height="24" viewBox="0 0 24 24" fill="none" stroke="#2d3748" stroke-width="3.6" stroke-linecap="round" stroke-linejoin="round"><path d="M2 2 L22 22 M22 2 L2 22" stroke-linecap="butt"/></svg>
<svg class="abs" style="left:1354.0px;top:861.0px" width="32" height="32" viewBox="0 0 24 24" fill="none" stroke="#2d3748" stroke-width="2" stroke-linecap="round" stroke-linejoin="round"><path d="M17 3a2.85 2.83 0 1 1 4 4L7.5 20.5 2 22l1.5-5.5Z"/></svg>
<div class="abs" style="left:1402px;top:844px;width:91.5px;height:68px;border:2px solid #e5e7eb;border-radius:12px;background:#fff"></div>
<svg class="abs" style="left:1431.5px;top:862.0px" width="32" height="32" viewBox="0 0 24 24" fill="none" stroke="#2d3748" stroke-width="2" stroke-linecap="round" stroke-linejoin="round"><path d="M5 12h14"/><path d="M12 5v14"/></svg>
<svg class="abs" style="left:1510.5px;top:861.0px" width="32" height="32" viewBox="0 0 24 24" fill="none" stroke="#2d3748" stroke-width="2" stroke-linecap="round" stroke-linejoin="round"><path d="M21 12a9 9 0 1 1-9-9c2.52 0 4.93 1 6.74 2.74L21 8"/><path d="M21 3v5h-5"/></svg>
<div class="abs" style="left:32px;top:1024px;width:88px;height:48px;border-radius:24px;background:#d1d5db"></div>
<div class="abs" style="left:36px;top:1028px;width:40px;height:40px;border-radius:20px;background:#fff"></div>
<div class="abs" style="left:135.5px;top:1028.3px;height:39px;line-height:39px;font-size:30px;font-weight:400;font-style:normal;color:#1f2937;white-space:nowrap;font-family:'Liberation Sans';-webkit-text-stroke:0.5px #1f2937">Schedule enabled</div>
<div class="abs" style="left:32px;top:1117px;width:1525px;height:227px;border:2px solid #f9e98b;border-radius:12px;background:#fffdeb"></div>
<svg class="abs" style="left:80.20000000000005px;top:1168.2px" width="31.6" height="31.6" viewBox="0 0 24 24" fill="none" stroke="#e2b33a" stroke-width="2" stroke-linecap="round" stroke-linejoin="round"><circle cx="12" cy="12" r="10"/><line x1="12" x2="12" y1="8" y2="12"/><line x1="12" x2="12.01" y1="16" y2="16"/></svg>
<div class="abs" style="left:135.0px;top:1165.1px;height:36px;line-height:36px;font-size:28px;font-weight:700;font-style:normal;color:#7f4c13;white-space:nowrap;font-family:'Liberation Sans';">Changes only applied upon deploy</div>
<div class="abs" style="left:133.5px;top:1215.6px;height:39px;line-height:39px;font-size:30px;font-weight:400;font-style:normal;color:#a0621a;white-space:nowrap;font-family:'Liberation Sans';">Changes to the primary schedule are only applied upon deploy. Other schedules' changes are applied</div>
<div class="abs" style="left:133.5px;top:1255.6px;height:39px;line-height:39px;font-size:30px;font-weight:400;font-style:normal;color:#a0621a;white-space:nowrap;font-family:'Liberation Sans';">immediately.</div>
<div class="abs" style="left:31.5px;top:1429.2px;height:53px;line-height:53px;font-size:41px;font-weight:700;font-style:normal;color:#2d3748;white-space:nowrap;font-family:'Liberation Sans';">Other schedules</div>
<div class="abs" style="left:32px;top:1510px;width:267px;height:58px;border:2px solid #e5e7eb;border-radius:12px;background:#fff"></div>
<svg class="abs" style="left:59.59999999999991px;top:1524.6px" width="28.8" height="28.8" viewBox="0 0 24 24" fill="none" stroke="#2d3748" stroke-width="2" stroke-linecap="round" stroke-linejoin="round"><rect width="18" height="18" x="3" y="4" rx="2" ry="2"/><line x1="16" x2="16" y1="2" y2="6"/><line x1="8" x2="8" y1="2" y2="6"/><line x1="3" x2="21" y1="10" y2="10"/></svg>
<div class="abs" style="left:105.5px;top:1522.9px;height:32px;line-height:32px;font-size:24.6px;font-weight:700;font-style:normal;color:#2d3748;white-space:nowrap;font-family:'Liberation Sans';">New Schedule</div>
<div class="abs" style="left:47.5px;top:1600.4px;height:34px;line-height:34px;font-size:26px;font-weight:400;font-style:normal;color:#4a5568;white-space:nowrap;font-family:'Liberation Sans';">No other schedules</div>
</div>
</body></html>
